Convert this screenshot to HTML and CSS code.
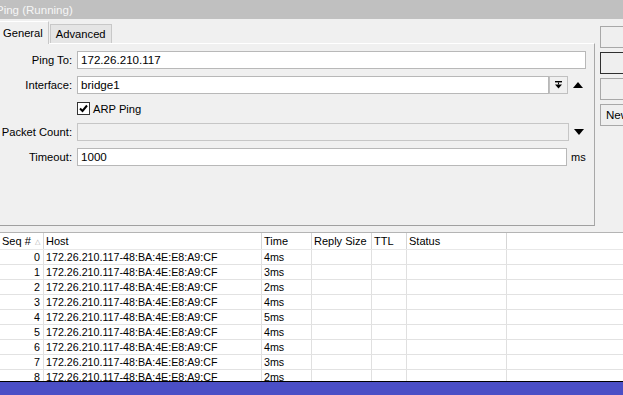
FILE: index.html
```html
<!DOCTYPE html>
<html>
<head>
<meta charset="utf-8">
<link rel="stylesheet" href="styles.css">
</head>
<body>
<div class="window">
  <div class="titlebar"><span class="title">Ping (Running)</span></div>
  <div class="top">
    <div class="left">
      <div class="tabs">
        <div class="tab active">General</div>
        <div class="tab">Advanced</div>
      </div>
      <div class="panel">
        <div class="form">
          <label class="lbl">Ping To:</label>
          <div class="field"><div class="input w-ping">172.26.210.117</div></div>

          <label class="lbl">Interface:</label>
          <div class="field">
            <div class="input w-iface">bridge1</div>
            <div class="ddbtn">
              <svg width="7" height="8" viewBox="0 0 7 8"><rect x="0" y="0" width="7" height="1.4" fill="#000"/><rect x="3" y="1.4" width="1" height="2" fill="#000"/><polygon points="0,3.4 7,3.4 3.5,7.5" fill="#000"/></svg>
            </div>
            <svg class="arrow" width="10" height="6" viewBox="0 0 10 6"><polygon points="0,6 10,6 5,0" fill="#000"/></svg>
          </div>

          <div></div>
          <div class="field check-row">
            <span class="checkbox"><svg width="9" height="9" viewBox="0 0 9 9"><polyline points="1,4.5 3.5,7 8,1.5" fill="none" stroke="#000" stroke-width="2"/></svg></span>
            <span class="check-text">ARP Ping</span>
          </div>

          <label class="lbl">Packet Count:</label>
          <div class="field">
            <div class="input disabled w-count"></div>
            <svg class="arrow" width="10" height="6" viewBox="0 0 10 6"><polygon points="0,0 10,0 5,6" fill="#000"/></svg>
          </div>

          <label class="lbl">Timeout:</label>
          <div class="field">
            <div class="input w-timeout">1000</div>
            <span class="unit">ms</span>
          </div>
        </div>
      </div>
    </div>
    <div class="side">
      <div class="btn"></div>
      <div class="btn default"></div>
      <div class="btn"></div>
      <div class="btn">New Terminal</div>
    </div>
  </div>
  <div class="spacer"></div>
  <div class="table">
    <div class="row head">
      <div class="c seq-h">Seq # <span class="sort">&#9651;</span></div>
      <div class="c">Host</div>
      <div class="c">Time</div>
      <div class="c">Reply Size</div>
      <div class="c">TTL</div>
      <div class="c">Status</div>
      <div class="c last"></div>
    </div>
    <div class="row"><div class="c num">0</div><div class="c">172.26.210.117-48:BA:4E:E8:A9:CF</div><div class="c">4ms</div><div class="c"></div><div class="c"></div><div class="c"></div><div class="c last"></div></div>
    <div class="row"><div class="c num">1</div><div class="c">172.26.210.117-48:BA:4E:E8:A9:CF</div><div class="c">3ms</div><div class="c"></div><div class="c"></div><div class="c"></div><div class="c last"></div></div>
    <div class="row"><div class="c num">2</div><div class="c">172.26.210.117-48:BA:4E:E8:A9:CF</div><div class="c">2ms</div><div class="c"></div><div class="c"></div><div class="c"></div><div class="c last"></div></div>
    <div class="row"><div class="c num">3</div><div class="c">172.26.210.117-48:BA:4E:E8:A9:CF</div><div class="c">4ms</div><div class="c"></div><div class="c"></div><div class="c"></div><div class="c last"></div></div>
    <div class="row"><div class="c num">4</div><div class="c">172.26.210.117-48:BA:4E:E8:A9:CF</div><div class="c">5ms</div><div class="c"></div><div class="c"></div><div class="c"></div><div class="c last"></div></div>
    <div class="row"><div class="c num">5</div><div class="c">172.26.210.117-48:BA:4E:E8:A9:CF</div><div class="c">4ms</div><div class="c"></div><div class="c"></div><div class="c"></div><div class="c last"></div></div>
    <div class="row"><div class="c num">6</div><div class="c">172.26.210.117-48:BA:4E:E8:A9:CF</div><div class="c">4ms</div><div class="c"></div><div class="c"></div><div class="c"></div><div class="c last"></div></div>
    <div class="row"><div class="c num">7</div><div class="c">172.26.210.117-48:BA:4E:E8:A9:CF</div><div class="c">3ms</div><div class="c"></div><div class="c"></div><div class="c"></div><div class="c last"></div></div>
    <div class="row"><div class="c num">8</div><div class="c">172.26.210.117-48:BA:4E:E8:A9:CF</div><div class="c">2ms</div><div class="c"></div><div class="c"></div><div class="c"></div><div class="c last"></div></div>
  </div>
  <div class="taskbar"></div>
</div>
</body>
</html>
```
FILE: styles.css
```css
* { box-sizing: border-box; }
html, body { margin: 0; padding: 0; }
body {
  width: 623px;
  height: 395px;
  overflow: hidden;
  background: #f0f0f0;
  font-family: "Liberation Sans", Arial, sans-serif;
  font-size: 11px;
  color: #000;
}
.window {
  width: 623px;
  height: 395px;
  display: flex;
  flex-direction: column;
  overflow: hidden;
}
.titlebar {
  height: 19px;
  flex: none;
  background: #c0c0c0;
  color: #f6f6f6;
  font-size: 11.5px;
  line-height: 20px;
  overflow: hidden;
  white-space: nowrap;
}
.title { margin-left: -4px; }
.top {
  display: flex;
  height: 207px;
  flex: none;
}
.left {
  width: 595px;
  flex: none;
  display: flex;
  flex-direction: column;
}
.tabs {
  height: 24px;
  flex: none;
  display: flex;
  align-items: flex-end;
}
.tab {
  height: 19px;
  padding: 0 5px;
  line-height: 18px;
  background: #e5e5e5;
  border: 1px solid #c8c8c8;
  border-bottom: none;
  margin-left: 1px;
  font-size: 11.2px;
}
.tab.active {
  height: 23px;
  line-height: 22px;
  background: #f0f0f0;
  border: 1px solid #ffffff;
  border-right: 1px solid #c8c8c8;
  border-bottom: none;
  margin-left: -2px;
  padding: 0 5px 0 4px;
  margin-bottom: -1px;
  position: relative;
  z-index: 1;
}
.panel {
  flex: 1;
  border-top: 1px solid #ffffff;
  border-right: 1px solid #a8a8a8;
  border-bottom: 1px solid #a0a0a0;
  padding-top: 7px;
}
.form {
  display: grid;
  grid-template-columns: 72px auto;
  grid-template-rows: 18px 18px 15px 18px 18px;
  column-gap: 5px;
  row-gap: 7px;
}
.lbl {
  text-align: right;
  line-height: 18px;
  white-space: nowrap;
  font-size: 11.2px;
}
.field {
  display: flex;
  align-items: center;
  height: 18px;
}
.input {
  height: 18px;
  background: #fff;
  border: 1px solid #b8b8b8;
  padding: 0 3px;
  line-height: 16px;
  font-size: 11.6px;
  white-space: nowrap;
}
.input.disabled { background: #f0f0f0; border-color: #c6c6c6; }
.w-ping { width: 509px; }
.w-iface { width: 472px; }
.w-count { width: 492px; }
.w-timeout { width: 490px; }
.ddbtn {
  width: 19px;
  height: 18px;
  border: 1px solid #c0c0c0;
  background: #f0f0f0;
  display: flex;
  align-items: center;
  justify-content: center;
}
.arrow { margin-left: 5px; }
.unit { margin-left: 4px; font-size: 11px; }
.check-row { height: 15px; }
.checkbox {
  width: 13px;
  height: 13px;
  border: 1px solid #333;
  background: #fff;
  display: flex;
  align-items: center;
  justify-content: center;
}
.check-text { margin-left: 3px; font-size: 11.2px; }
.side {
  margin-left: 5px;
  padding-top: 7px;
  display: flex;
  flex-direction: column;
  gap: 4px;
}
.btn {
  width: 90px;
  height: 22px;
  border: 1px solid #a8a8a8;
  background: #efefef;
  line-height: 20px;
  padding-left: 5px;
  white-space: nowrap;
  font-size: 11.6px;
}
.btn.default { border: 1px solid #303030; }
.spacer { height: 6px; flex: none; }
.table {
  flex: 1;
  background: #fff;
  border-top: 1px solid #b4b4b4;
  overflow: hidden;
}
.row {
  display: grid;
  grid-template-columns: 44px 218px 50px 60px 35px 100px 1fr;
  height: 15px;
  border-bottom: 1px solid #e2e2e2;
  font-size: 10.7px;
  line-height: 14px;
}
.row.head {
  height: 17px;
  line-height: 16px;
  border-bottom: 1px solid #e8e8e8;
  font-size: 11px;
}
.c {
  border-right: 1px solid #e0e0e0;
  padding-left: 2px;
  white-space: nowrap;
  overflow: hidden;
}
.head .c { border-right-color: #d6d6d6; }
.c.last { border-right: none; }
.c.num { text-align: right; padding-right: 3px; padding-left: 0; }
.seq-h { padding-left: 2px; }
.sort { color: #aaa; font-size: 7px; margin-left: 1px; vertical-align: 1px; }
.taskbar {
  height: 14px;
  flex: none;
  background: #4b4fc6;
  border-top: 1px solid #000;
}
```
